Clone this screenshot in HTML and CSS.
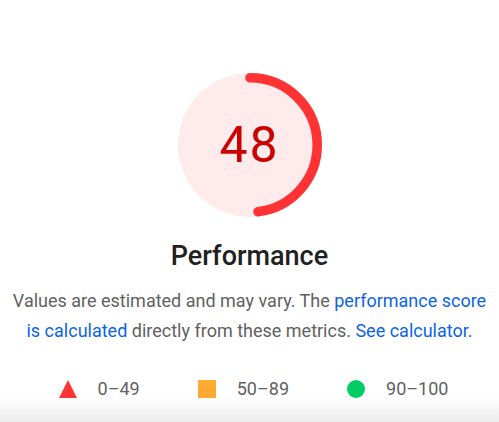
FILE: index.html
```html
<!DOCTYPE html>
<html lang="en">
<head>
    <meta charset="UTF-8">
    <meta name="viewport" content="width=device-width, initial-scale=1.0">
    <title>Performance</title>
    <link rel="stylesheet" href="styles.css">
</head>
<body>
    <main class="category">
        <div class="gauge">
            <svg class="gauge-svg" viewBox="0 0 120 120" width="144" height="144">
                <circle class="gauge-base" cx="60" cy="60" r="60"></circle>
                <circle class="gauge-arc" cx="60" cy="60" r="56" transform="rotate(-90 60 60)"
                        stroke-dasharray="168.89 351.86"></circle>
            </svg>
            <div class="gauge-score">48</div>
        </div>
        <h2 class="category-title">Performance</h2>
        <p class="category-desc">
            Values are estimated and may vary. The <a href="#">performance score is calculated</a>
            directly from these metrics. <a href="#">See calculator.</a>
        </p>
        <ul class="legend">
            <li class="legend-item"><span class="shape shape-fail"></span>0–49</li>
            <li class="legend-item"><span class="shape shape-average"></span>50–89</li>
            <li class="legend-item"><span class="shape shape-pass"></span>90–100</li>
        </ul>
    </main>
    <div class="fade"></div>
</body>
</html>
```

FILE: styles.css
```css
* {
    box-sizing: border-box;
    margin: 0;
    padding: 0;
}

body {
    font-family: Roboto, 'Liberation Sans', sans-serif;
    background: #fff;
    color: #212121;
    height: 422px;
    overflow: hidden;
    position: relative;
}

.category {
    display: flex;
    flex-direction: column;
    align-items: center;
    padding-top: 73px;
}

.gauge {
    position: relative;
    width: 144px;
    height: 144px;
}

.gauge-svg {
    display: block;
}

.gauge-base {
    fill: #ffebeb;
    stroke: none;
}

.gauge-arc {
    fill: none;
    stroke: #ff3333;
    stroke-width: 8;
    stroke-linecap: round;
}

.gauge-score {
    position: absolute;
    inset: 0;
    display: flex;
    align-items: center;
    justify-content: center;
    font-size: 50px;
    color: #cc0000;
    letter-spacing: 2px;
}

.category-title {
    margin-top: 23px;
    font-size: 27px;
    font-weight: 500;
    line-height: 32px;
    color: #212121;
}

.category-desc {
    margin-top: 14px;
    padding: 0 10px;
    font-size: 18px;
    line-height: 30px;
    text-align: center;
    color: #616161;
}

.category-desc a {
    color: #0c64e8;
    text-decoration: none;
}

.legend {
    list-style: none;
    display: flex;
    gap: 58px;
    margin-top: 32px;
    padding-left: 8px;
}

.legend-item {
    display: flex;
    align-items: center;
    gap: 21px;
    font-size: 18px;
    color: #616161;
}

.shape {
    display: inline-block;
    width: 18px;
    height: 18px;
}

.shape-fail {
    width: 0;
    height: 0;
    border-left: 9px solid transparent;
    border-right: 9px solid transparent;
    border-bottom: 18px solid #ff3333;
}

.shape-average {
    background: #ffaa33;
}

.shape-pass {
    background: #00cc66;
    border-radius: 50%;
}

.fade {
    position: absolute;
    left: 0;
    right: 0;
    bottom: 0;
    height: 24px;
    background: linear-gradient(#fff, #ececec);
}
```
